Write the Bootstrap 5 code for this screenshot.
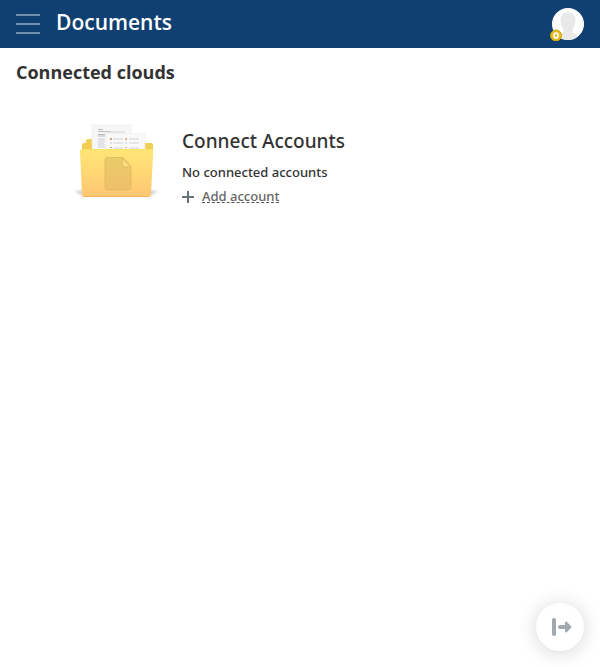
<!DOCTYPE html>
<html lang="en">
<head>
<meta charset="utf-8">
<meta name="viewport" content="width=device-width, initial-scale=1">
<title>Documents</title>
<link href="https://cdn.jsdelivr.net/npm/bootstrap@5.3.0/dist/css/bootstrap.min.css" rel="stylesheet">
<style>
body { font-family: "Open Sans", sans-serif; color: #333; background: #fff; }
.topbar { background: #0f4071; height: 48px; }
.topbar h1 { font-size: 21px; line-height: 28px; font-weight: 600; padding-bottom: 4px; }
.plain-btn { background: none; border: 0; padding: 0; line-height: 0; }
.section-title { font-size: 18px; line-height: 24px; font-weight: 700; padding-top: 12px; }
.accounts { padding: 36px 16px 0 72px; gap: 20px; font-family: "Noto Sans", "Open Sans", sans-serif; }
.accounts h3 { font-size: 19px; line-height: 26px; font-weight: 500; }
.accounts p { font-size: 13px; line-height: 20px; font-weight: 500; }
.add-link { font-size: 13px; line-height: 12px; font-weight: 500; color: #666; text-decoration: none; border-bottom: 1px dashed #555; }
.fab { width: 48px; height: 48px; margin: 16px; background: #fff; box-shadow: 0 2px 20px rgba(0,0,0,.16); }
</style>
</head>
<body class="d-flex flex-column min-vh-100">
<header class="topbar d-flex align-items-center px-3">
  <button class="plain-btn me-3" type="button" aria-label="Menu">
    <svg width="24" height="22" viewBox="0 0 24 22"><path d="M0 2h24M0 11h24M0 20h24" stroke="#7290ad" stroke-width="2"/></svg>
  </button>
  <h1 class="text-white mb-0 me-auto">Documents</h1>
  <button class="plain-btn" type="button" aria-label="Profile">
    <svg width="34" height="34" viewBox="0 0 34 34">
      <circle cx="18" cy="17" r="16" fill="#fff"/>
      <path d="M18 5c5 0 7.500 3.500 7.500 8.500 0 4-1.500 7-3 9 0 3 1 4 4.500 5.500l1 1.500C25.500 32 22 33 18 33s-7.500-1-10-3.500l1-1.500c3.500-1.500 4.500-2.500 4.500-5.500-1.500-2-3-5-3-9C10.500 8.500 13 5 18 5z" fill="#e9e9e9"/>
      <circle cx="6" cy="28.500" r="5.500" fill="#e4bd20" stroke="#c9a200"/>
      <ellipse cx="6" cy="28.500" rx="2" ry="2.500" fill="none" stroke="#fff" stroke-width="1.500"/>
    </svg>
  </button>
</header>
<main class="flex-grow-1">
  <h2 class="section-title px-3 mb-0">Connected clouds</h2>
  <section class="accounts d-flex">
    <svg class="flex-shrink-0" width="90" height="84" viewBox="72 120 90 84" aria-hidden="true">
      <defs>
        <linearGradient id="front" x1="0" y1="0" x2="0" y2="1"><stop offset="0" stop-color="#ffe676"/><stop offset=".5" stop-color="#ffd774"/><stop offset="1" stop-color="#ffc673"/></linearGradient>
        <linearGradient id="doc" x1="0" y1="0" x2="0" y2="1"><stop offset="0" stop-color="#e9cd68"/><stop offset="1" stop-color="#f0be6b"/></linearGradient>
        <filter id="soft" x="-20%" y="-100%" width="140%" height="300%"><feGaussianBlur stdDeviation="1"/></filter>
      </defs>
      <path d="M75 191l8-1h65l10 1-7 5H82z" fill="#999" opacity=".4" filter="url(#soft)"/>
      <path d="M82 152v-7q0-2 2-2h2v-2q0-2 2-2h5v4h58q2 0 2 2v7z" fill="#f1cd50"/>
      <path d="M92 125h39v27H92z" fill="#f6f6f6" stroke="#e9e9e9" stroke-width=".5"/>
      <path d="M98 129.500h5M98 131.500h13M98 134.500h7M98 136h7" stroke="#bbb" stroke-width="1"/>
      <path d="M104 132h21" stroke="#d4d4d4" stroke-width="1"/>
      <path d="M98 139h7M98 141h7M98 143h6M98 145h7M98 147h7" stroke="#cfcfdd" stroke-width="1"/>
      <path d="M106 133.500h39V152h-39z" fill="#f8f8f8" stroke="#ececec" stroke-width=".5"/>
      <path d="M113 139h10M129 139h10M113 143h10M129 143h10M113 148h10M129 148h10" stroke="#d4d4d4" stroke-width="1"/>
      <path d="M110 138h2v2h-2zM110 147h2v1h-2z" fill="#c3a67c"/><path d="M125 138h2v2h-2zM125 147h2v1h-2z" fill="#e8b49b"/>
      <path d="M110 143h2M125 143h2" stroke="#c5cce0"/>
      <path d="M82 149h69q2.500 0 2.200 2.500l-2.200 43q-.2 2.500-2.500 2.500h-64q-2.300 0-2.500-2.500l-2-43q-.2-2.500 2-2.500z" fill="url(#front)"/>
      <path d="M82 149.500h69" stroke="#f7de68"/>
      <path d="M83 196.500h66" stroke="#f1b35e"/>
      <path d="M107 157.500h16l8 9V188q0 2-2 2h-22q-2 0-2-2v-28.500q0-2 2-2z" fill="url(#doc)" stroke="#dcb95d" stroke-width=".8"/>
      <path d="M122.500 158v7q0 2 2 2h6z" fill="#fbdc80" stroke="#d8b959" stroke-width=".7"/>
    </svg>
    <div class="pt-2">
      <h3 class="mb-0">Connect Accounts</h3>
      <p class="mb-0 mt-2">No connected accounts</p>
      <div class="d-flex align-items-center mt-2 gap-2">
        <svg width="12" height="12" viewBox="0 0 12 12" aria-hidden="true"><path d="M0 6h12M6 0v12" stroke="#66727a" stroke-width="2"/></svg>
        <a class="add-link" href="#">Add account</a>
      </div>
    </div>
  </section>
</main>
<div class="sticky-bottom d-flex justify-content-end">
  <button class="plain-btn fab rounded-circle d-flex align-items-center justify-content-center" type="button" aria-label="Expand panel">
    <svg width="24" height="24" viewBox="0 0 24 24"><path d="M6 5v14" stroke="#a1a8ae" stroke-width="4" stroke-linecap="round"/><path d="M12 12h6" stroke="#a1a8ae" stroke-width="4" stroke-linecap="round"/><path d="M18 7.500l4.500 4.500-4.500 4.500z" fill="#a1a8ae" stroke="#a1a8ae" stroke-width="2" stroke-linejoin="round"/></svg>
  </button>
</div>
<script src="https://cdn.jsdelivr.net/npm/bootstrap@5.3.0/dist/js/bootstrap.bundle.min.js"></script>
</body>
</html>
